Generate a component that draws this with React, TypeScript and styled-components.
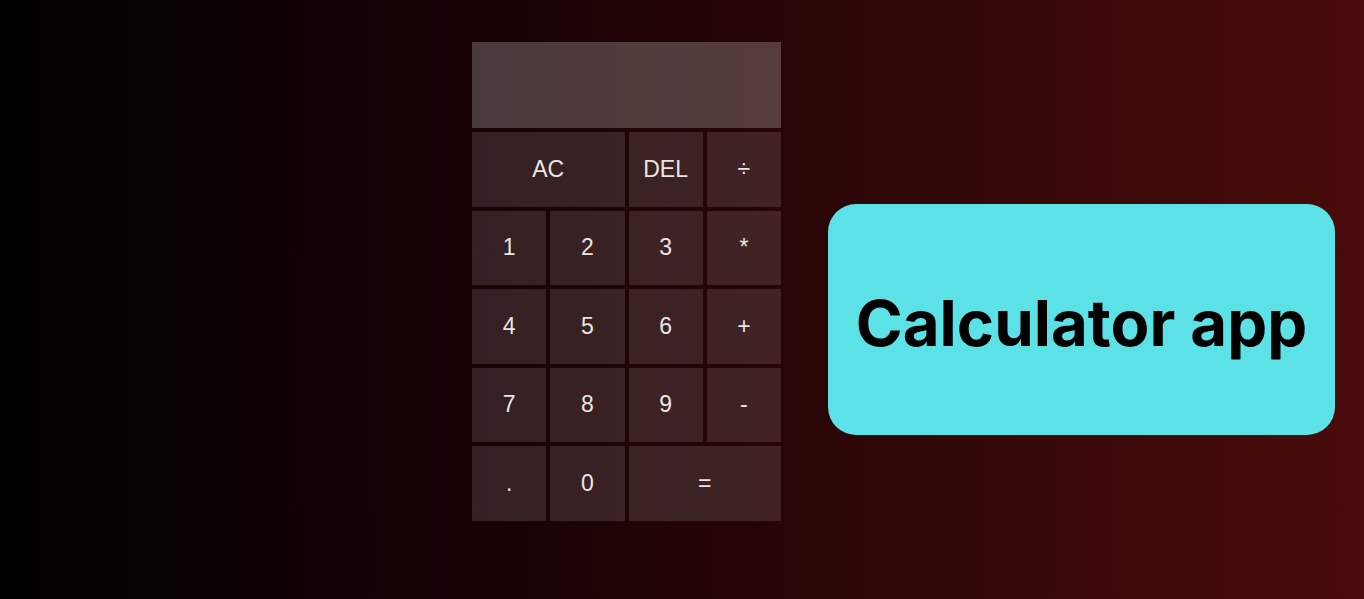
import styled, { createGlobalStyle } from 'styled-components';

const GlobalStyle = createGlobalStyle`
  * { box-sizing: border-box; }
  html, body { margin: 0; padding: 0; }
  body {
    width: 1364px;
    height: 599px;
    overflow: hidden;
    background: linear-gradient(to right, #000000 0%, #1c0305 40%, #2a0607 60%, #4a0b0b 100%);
    font-family: "Liberation Sans", Arial, sans-serif;
  }
`;

const Page = styled.main`
  display: flex;
  align-items: flex-start;
  padding: 42px 0 0 472px;
  gap: 47px;
  height: 599px;
`;

const CalcGrid = styled.div`
  display: grid;
  grid-template-columns: repeat(4, 74.25px);
  grid-template-rows: 86px repeat(5, 74.5px);
  gap: 4px;
`;

const Display = styled.div`
  grid-column: 1 / -1;
  background: rgba(255, 255, 255, 0.22);
`;

const Key = styled.button<{ $span?: number }>`
  grid-column: span ${({ $span }) => $span ?? 1};
  border: none;
  margin: 0;
  padding: 0;
  background: rgba(255, 255, 255, 0.12);
  color: #ece4e4;
  font-family: "Liberation Sans", Arial, sans-serif;
  font-size: 23px;
  cursor: pointer;
`;

const Card = styled.div`
  margin-top: 162px;
  width: 507px;
  height: 231px;
  border-radius: 28px;
  background: #5ce1e6;
  display: flex;
  align-items: center;
  justify-content: center;
`;

const CardTitle = styled.h1`
  margin: 6px 0 0;
  font-family: Inter, "Noto Sans", sans-serif;
  font-weight: 700;
  font-size: 63.5px;
  color: #000;
`;

const keys: { label: string; span?: number }[] = [
  { label: 'AC', span: 2 },
  { label: 'DEL' },
  { label: '÷' },
  { label: '1' },
  { label: '2' },
  { label: '3' },
  { label: '*' },
  { label: '4' },
  { label: '5' },
  { label: '6' },
  { label: '+' },
  { label: '7' },
  { label: '8' },
  { label: '9' },
  { label: '-' },
  { label: '.' },
  { label: '0' },
  { label: '=', span: 2 },
];

const App = () => {
  return (
    <>
      <GlobalStyle />
      <Page>
        <CalcGrid>
          <Display />
          {keys.map((k) => (
            <Key key={k.label} $span={k.span}>
              {k.label}
            </Key>
          ))}
        </CalcGrid>
        <Card>
          <CardTitle>Calculator app</CardTitle>
        </Card>
      </Page>
    </>
  );
};

export default App;
